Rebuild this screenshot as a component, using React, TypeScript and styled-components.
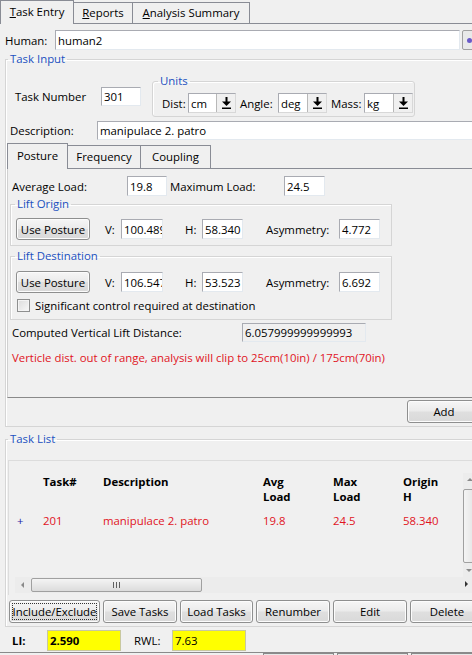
import React from 'react';
import styled, { createGlobalStyle } from 'styled-components';

const GlobalStyle = createGlobalStyle`
  html, body {
    margin: 0;
    padding: 0;
    background: #f0f0f0;
  }
  body {
    font-family: 'Open Sans', 'Noto Sans', sans-serif;
    font-size: 11.4px;
    color: #000;
  }
`;

const TITLE_BLUE = '#2150c0';
const ERROR_RED = '#e0141e';

const Window = styled.div`
  width: 472px;
  height: 655px;
  overflow: hidden;
  background: #f0f0f0;
`;

const Sheet = styled.div`
  width: 482px;
`;

const TabBar = styled.div<{ $h: number; $ml?: number }>`
  display: flex;
  align-items: flex-end;
  box-sizing: border-box;
  height: ${p => p.$h}px;
  margin-left: ${p => p.$ml ?? 0}px;
  border-bottom: 1px solid #898c95;
`;

const Tab = styled.div<{ $w: number; $h: number; $active?: boolean }>`
  box-sizing: border-box;
  display: flex;
  align-items: center;
  justify-content: center;
  width: ${p => p.$w}px;
  height: ${p => p.$h}px;
  margin-left: -1px;
  margin-bottom: ${p => (p.$active ? -1 : 0)}px;
  padding-bottom: 2px;
  border: 1px solid #898c95;
  border-bottom: none;
  background: #f0f0f0;
  position: relative;
  z-index: ${p => (p.$active ? 1 : 0)};
  white-space: nowrap;
  &:first-child {
    margin-left: 0;
  }
`;

const Row = styled.div<{ $mt?: number; $ml?: number; $align?: string }>`
  display: flex;
  align-items: ${p => p.$align ?? 'center'};
  margin-top: ${p => p.$mt ?? 0}px;
  margin-left: ${p => p.$ml ?? 0}px;
`;

const Label = styled.span<{ $w?: number; $ml?: number; $bold?: boolean }>`
  display: inline-block;
  flex-shrink: 0;
  width: ${p => (p.$w ? `${p.$w}px` : 'auto')};
  margin-left: ${p => p.$ml ?? 0}px;
  font-weight: ${p => (p.$bold ? 700 : 400)};
  white-space: nowrap;
`;

const Field = styled.div<{ $w: number; $h?: number; $bg?: string; $bold?: boolean }>`
  box-sizing: border-box;
  flex-shrink: 0;
  display: flex;
  align-items: center;
  width: ${p => p.$w}px;
  height: ${p => p.$h ?? 20}px;
  padding: 0 2px;
  background: ${p => p.$bg ?? '#fff'};
  border: 1px solid;
  border-color: #a9abb2 #e3e9ef #e3e9ef #a9abb2;
  font-weight: ${p => (p.$bold ? 700 : 400)};
  white-space: nowrap;
  overflow: hidden;
`;

const Group = styled.fieldset<{ $w?: number; $ml?: number; $mt?: number; $rounded?: boolean }>`
  box-sizing: border-box;
  min-width: 0;
  width: ${p => (p.$w ? `${p.$w}px` : 'auto')};
  margin: ${p => p.$mt ?? 0}px 0 0 ${p => p.$ml ?? 0}px;
  padding: 0;
  border: 1px solid #d5d5d5;
  border-radius: ${p => (p.$rounded ? 3 : 0)}px;
  box-shadow: inset 1px 1px 0 #fff;
`;

const Legend = styled.legend<{ $ml: number }>`
  margin-left: ${p => p.$ml}px;
  padding: 0 2px;
  line-height: 14px;
  color: ${TITLE_BLUE};
`;

const GroupBody = styled.div<{ $pad: string }>`
  padding: ${p => p.$pad};
`;

const Button = styled.div<{ $w: number; $h?: number; $focus?: boolean }>`
  box-sizing: border-box;
  flex-shrink: 0;
  display: flex;
  align-items: center;
  justify-content: center;
  width: ${p => p.$w}px;
  height: ${p => p.$h ?? 23}px;
  border: 1px solid #8e8f8f;
  border-radius: 3px;
  background: linear-gradient(#f6f6f6 0%, #ebebeb 48%, #dfdfdf 52%, #d9d9d9 100%);
  box-shadow: inset 0 0 0 1px #fcfcfc;
  white-space: nowrap;
  outline: ${p => (p.$focus ? '1px dotted #333' : 'none')};
  outline-offset: -4px;
`;

const Combo = styled.div<{ $w: number }>`
  box-sizing: border-box;
  display: flex;
  width: ${p => p.$w}px;
  height: 20px;
  border: 1px solid;
  border-color: #a9abb2 #d8d8d8 #d8d8d8 #a9abb2;
  background: #fff;
`;

const ComboText = styled.div`
  flex: 1;
  display: flex;
  align-items: center;
  padding-left: 2px;
`;

const ComboArrow = styled.div`
  box-sizing: border-box;
  width: 19px;
  display: flex;
  align-items: center;
  justify-content: center;
  background: #f0f0f0;
  border-left: 1px solid #b8b8b8;
`;

const InnerPanel = styled.div`
  box-sizing: border-box;
  height: 229px;
  border-left: 1px solid #d0d0d0;
  border-bottom: 1px solid #8a8a8a;
  padding: 7px 0 0 0;
`;

const Check = styled.div`
  box-sizing: border-box;
  width: 13px;
  height: 13px;
  border: 1px solid #8e8f8f;
  background: linear-gradient(135deg, #dcdcdc, #f8f8f8);
  box-shadow: inset 0 0 0 1px #f4f4f4;
`;

const ErrorText = styled.div`
  margin: 9px 0 0 4px;
  line-height: 14px;
  color: ${ERROR_RED};
  white-space: nowrap;
`;

const ListPane = styled.div`
  box-sizing: border-box;
  width: 466px;
  height: 135px;
  border-top: 1px solid #dcdcdc;
  border-left: 1px solid #dcdcdc;
  display: flex;
  flex-direction: column;
`;

const ListTop = styled.div`
  display: flex;
  height: 116px;
`;

const Table = styled.div`
  flex: 1;
  display: grid;
  grid-template-columns: 34px 60px 160px 70px 70px 60px;
  grid-auto-rows: min-content;
  padding-top: 13px;
  line-height: 15px;
  white-space: nowrap;
`;

const HeadCell = styled.div`
  font-weight: 700;
  line-height: 15px;
`;

const Cell = styled.div<{ $color: string; $pl?: number }>`
  margin-top: 9px;
  padding-left: ${p => p.$pl ?? 0}px;
  color: ${p => p.$color};
`;

const VScroll = styled.div`
  box-sizing: border-box;
  width: 14px;
  margin-top: 12px;
  display: flex;
  flex-direction: column;
  background: #ececec;
`;

const ScrollArrow = styled.div<{ $size: number }>`
  flex-shrink: 0;
  height: ${p => p.$size}px;
  width: ${p => p.$size}px;
  display: flex;
  align-items: center;
  justify-content: center;
`;

const VThumb = styled.div`
  flex: 1;
  margin: 2px 0;
  border: 1px solid #a0a0a0;
  border-radius: 2px;
  background: linear-gradient(90deg, #f4f4f4, #e2e2e2);
`;

const HScroll = styled.div`
  display: flex;
  height: 16px;
  margin-left: 6px;
  width: 458px;
  background: #ececec;
`;

const HThumb = styled.div`
  box-sizing: border-box;
  width: 171px;
  margin: 1px 0;
  border: 1px solid #a0a0a0;
  border-radius: 2px;
  background: linear-gradient(#f4f4f4, #dcdcdc);
  display: flex;
  align-items: center;
  justify-content: center;
  gap: 2px;
`;

const Grip = styled.span`
  width: 1px;
  height: 6px;
  background: #606060;
`;

const Track = styled.div`
  flex: 1;
`;

const Yellow = styled(Field)`
  background: #ffff00;
  border: 1px solid #c8c8a0;
`;

const Footer = styled.div`
  height: 4px;
  margin-top: 1px;
  border-top: 1px solid #8a8a8a;
  display: flex;
  gap: 3px;
  padding-left: 263px;
`;

const FooterCell = styled.div`
  width: 73px;
  border: 1px solid #8a8a8a;
  border-bottom: none;
  background: #e8e8e8;
`;

const PickButton = styled.div`
  box-sizing: border-box;
  width: 20px;
  height: 20px;
  margin-left: 2px;
  border: 1px solid #a0a0a0;
  border-radius: 2px;
  background: #e9e9e9;
  display: flex;
  align-items: center;
  padding-left: 4px;
`;

const Dot = styled.span`
  width: 5px;
  height: 5px;
  border-radius: 50%;
  background: #6a5ac8;
`;

const AddRow = styled(Row)`
  justify-content: flex-end;
`;

const ButtonRow = styled(Row)`
  gap: 3px;
`;

const InnerTabs = styled(TabBar)`
  margin-top: 3px;
`;

const DropIcon = () => (
  <svg width="9" height="12" viewBox="0 0 9 12">
    <rect x="3.5" y="0" width="2" height="5" fill="#000" />
    <polygon points="0,4.5 9,4.5 4.5,9" fill="#000" />
    <rect x="0" y="10.5" width="9" height="1.5" fill="#000" />
  </svg>
);

const Tri = ({ dir }: { dir: 'up' | 'down' | 'left' | 'right' }) => {
  const pts = {
    up: '1,5 7,5 4,2',
    down: '1,2 7,2 4,5',
    left: '5,1 5,7 2,4',
    right: '3,1 3,7 6,4',
  }[dir];
  return (
    <svg width="8" height="8" viewBox="0 0 8 8">
      <polygon points={pts} fill={dir === 'right' ? '#333' : '#8a8a8a'} />
    </svg>
  );
};

const UnitCombo = ({ value, w }: { value: string; w: number }) => (
  <Combo $w={w}>
    <ComboText>{value}</ComboText>
    <ComboArrow>
      <DropIcon />
    </ComboArrow>
  </Combo>
);

const PostureRow = ({ v, h, a }: { v: string; h: string; a: string }) => (
  <Row>
    <Button $w={74} $h={22}>Use Posture</Button>
    <Label $w={16} $ml={15}>V:</Label>
    <Field $w={42}>{v}</Field>
    <Label $w={17} $ml={22}>H:</Label>
    <Field $w={41}>{h}</Field>
    <Label $w={73} $ml={23}>Asymmetry:</Label>
    <Field $w={41}>{a}</Field>
  </Row>
);

const columns = [
  { key: 'plus', head: ['', ''] },
  { key: 'num', head: ['Task#', ''] },
  { key: 'desc', head: ['Description', ''] },
  { key: 'avg', head: ['Avg', 'Load'] },
  { key: 'max', head: ['Max', 'Load'] },
  { key: 'orig', head: ['Origin', 'H'] },
];

const tasks = [
  { plus: '+', num: '201', desc: 'manipulace 2. patro', avg: '19.8', max: '24.5', orig: '58.340' },
];

const bottomButtons = [
  { label: 'Include/Exclude', w: 91, focus: true },
  { label: 'Save Tasks', w: 74 },
  { label: 'Load Tasks', w: 73 },
  { label: 'Renumber', w: 74 },
  { label: 'Edit', w: 74 },
  { label: 'Delete', w: 74 },
];

export default function App() {
  return (
    <Window>
      <GlobalStyle />
      <Sheet>
        <TabBar $h={24}>
          <Tab $w={74} $h={24} $active>
            <span><u>T</u>ask Entry</span>
          </Tab>
          <Tab $w={60} $h={21}>
            <span><u>R</u>eports</span>
          </Tab>
          <Tab $w={118} $h={21}>
            <span><u>A</u>nalysis Summary</span>
          </Tab>
        </TabBar>

        <Row $mt={6} $ml={5}>
          <Label $w={50}>Human:</Label>
          <Field $w={405}>human2</Field>
          <PickButton>
            <Dot />
          </PickButton>
        </Row>

        <Group $ml={5} $mt={2} $w={477}>
          <Legend $ml={2}>Task Input</Legend>
          <GroupBody $pad="8px 0 3px 1px">
            <Row $align="flex-start">
              <Row $mt={13} $ml={8}>
                <Label $w={86}>Task Number</Label>
                <Field $w={40} $h={19}>301</Field>
              </Row>
              <Group $ml={11} $w={263} $rounded>
                <Legend $ml={5}>Units</Legend>
                <GroupBody $pad="5px 0 3px 9px">
                  <Row>
                    <Label $w={26}>Dist:</Label>
                    <UnitCombo value="cm" w={48} />
                    <Label $w={38} $ml={4}>Angle:</Label>
                    <UnitCombo value="deg" w={49} />
                    <Label $w={33} $ml={4}>Mass:</Label>
                    <UnitCombo value="kg" w={49} />
                  </Row>
                </GroupBody>
              </Group>
            </Row>

            <Row $mt={4} $ml={3}>
              <Label $w={87}>Description:</Label>
              <Field $w={390} $h={19}>manipulace 2. patro</Field>
            </Row>

            <InnerTabs $h={26}>
              <Tab $w={61} $h={26} $active>Posture</Tab>
              <Tab $w={74} $h={23}>Frequency</Tab>
              <Tab $w={71} $h={23}>Coupling</Tab>
            </InnerTabs>

            <InnerPanel>
              <Row $ml={4}>
                <Label $w={115}>Average Load:</Label>
                <Field $w={40}>19.8</Field>
                <Label $w={114} $ml={3}>Maximum Load:</Label>
                <Field $w={41}>24.5</Field>
              </Row>

              <Group $ml={2} $mt={1} $w={382}>
                <Legend $ml={4}>Lift Origin</Legend>
                <GroupBody $pad="7px 0 5px 5px">
                  <PostureRow v="100.489" h="58.340" a="4.772" />
                </GroupBody>
              </Group>

              <Group $ml={2} $mt={3} $w={382}>
                <Legend $ml={4}>Lift Destination</Legend>
                <GroupBody $pad="8px 0 6px 5px">
                  <PostureRow v="106.547" h="53.523" a="6.692" />
                  <Row $mt={5} $ml={1}>
                    <Check />
                    <Label $ml={5}>Significant control required at destination</Label>
                  </Row>
                </GroupBody>
              </Group>

              <Row $mt={3} $ml={4}>
                <Label $w={230}>Computed Vertical Lift Distance:</Label>
                <Field $w={124} $h={19} $bg="#f0f0f0">6.057999999999993</Field>
              </Row>

              <ErrorText>
                Verticle dist. out of range, analysis will clip to 25cm(10in) / 175cm(70in)
              </ErrorText>
            </InnerPanel>

            <AddRow $mt={2}>
              <Button $w={74}>Add</Button>
            </AddRow>
          </GroupBody>
        </Group>

        <Group $ml={5} $mt={5} $w={477}>
          <Legend $ml={2}>Task List</Legend>
          <GroupBody $pad="14px 0 3px 2px">
            <ListPane>
              <ListTop>
                <Table>
                  {columns.map(c => (
                    <HeadCell key={c.key}>
                      {c.head[0]}
                      <br />
                      {c.head[1] || '\u00a0'}
                    </HeadCell>
                  ))}
                  {tasks.map(t =>
                    columns.map(c => (
                      <Cell
                        key={`${t.num}-${c.key}`}
                        $color={c.key === 'plus' ? '#1a1aa8' : ERROR_RED}
                        $pl={c.key === 'plus' ? 8 : 0}
                      >
                        {t[c.key as keyof typeof t]}
                      </Cell>
                    ))
                  )}
                </Table>
                <VScroll>
                  <ScrollArrow $size={14}><Tri dir="up" /></ScrollArrow>
                  <VThumb />
                  <ScrollArrow $size={12}><Tri dir="down" /></ScrollArrow>
                </VScroll>
              </ListTop>
              <HScroll>
                <ScrollArrow $size={16}><Tri dir="left" /></ScrollArrow>
                <HThumb>
                  <Grip />
                  <Grip />
                  <Grip />
                </HThumb>
                <Track />
                <ScrollArrow $size={14}><Tri dir="right" /></ScrollArrow>
              </HScroll>
            </ListPane>

            <ButtonRow $mt={5} $ml={1}>
              {bottomButtons.map(b => (
                <Button key={b.label} $w={b.w} $focus={b.focus}>
                  {b.label}
                </Button>
              ))}
            </ButtonRow>
          </GroupBody>
        </Group>

        <Row $mt={3} $ml={12}>
          <Label $w={35} $bold>LI:</Label>
          <Yellow $w={74} $h={21} $bold>2.590</Yellow>
          <Label $w={38} $ml={13}>RWL:</Label>
          <Yellow $w={74} $h={21}>7.63</Yellow>
        </Row>

        <Footer>
          <FooterCell />
          <FooterCell />
          <FooterCell />
        </Footer>
      </Sheet>
    </Window>
  );
}
